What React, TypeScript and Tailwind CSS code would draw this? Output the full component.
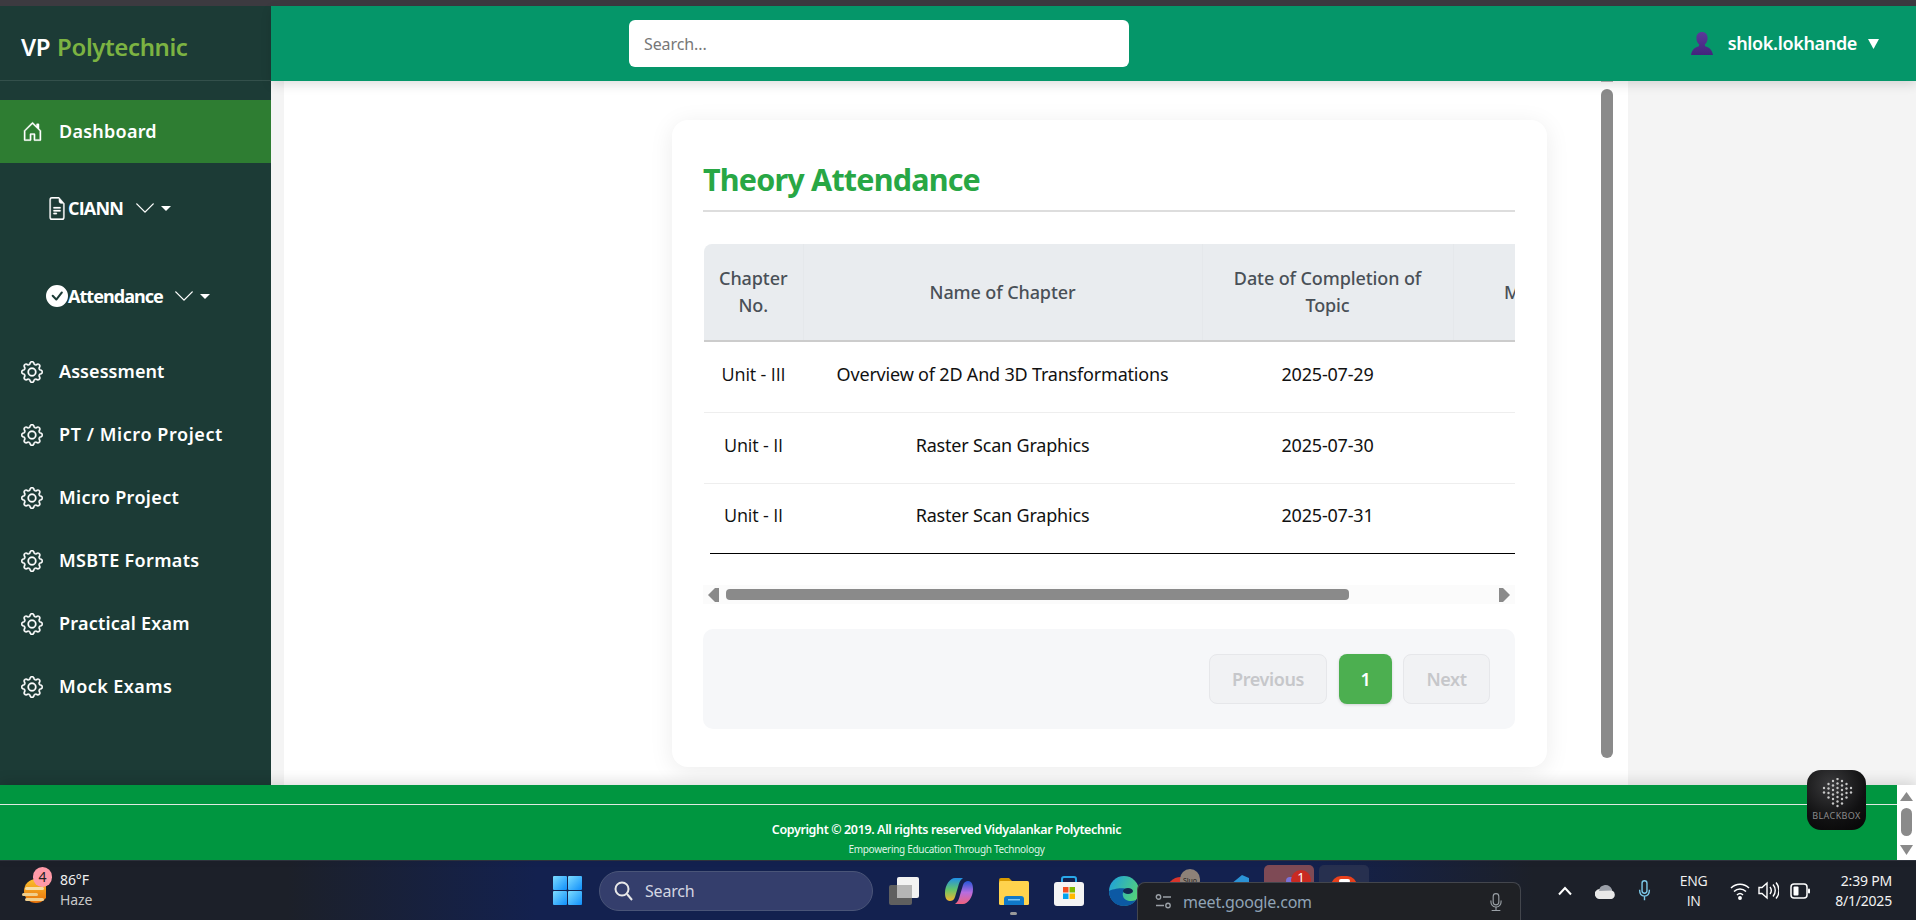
import React from "react";
import { BsHouseDoor, BsGear, BsFileEarmarkText, BsCheckCircleFill, BsChevronDown, BsMic } from "react-icons/bs";

const font = "[font-family:'Noto_Sans','Open_Sans',sans-serif]";
const plainI = "[font-family:'Open_Sans','Noto_Sans',sans-serif]";

function Caret() {
  return <span className="ml-[5px] inline-block h-0 w-0 border-x-[5px] border-t-[5px] border-x-transparent border-t-white" />;
}

function GearItem({ label, track }: { label: string; track: string }) {
  return (
    <div className={`flex h-[63px] items-center pl-[21px] text-[18px] font-semibold text-white ${track}`}>
      <BsGear className="h-[22px] w-[22px] shrink-0 stroke-[0.25px]" />
      <span className="ml-[16px]">{label}</span>
    </div>
  );
}

const gearItems: [string, string][] = [
  ["Assessment", "tracking-[0.07px]"],
  ["PT / Micro Project", "tracking-[0.58px]"],
  ["Micro Project", "tracking-[0.35px]"],
  ["MSBTE Formats", "tracking-[0.35px]"],
  ["Practical Exam", "tracking-[0.22px]"],
  ["Mock Exams", "tracking-[0.43px]"],
];

function Sidebar() {
  return (
    <aside className="flex w-[271px] shrink-0 flex-col bg-[#1c3b36]">
      <div className="flex h-[75px] items-center border-b border-[#33504b] pl-[21px] pt-[7px] text-[24px] font-semibold leading-none tracking-[-0.4px]">
        <span className="text-white">VP</span>
        <span className="ml-[7px] text-[#7cb342]">Polytechnic</span>
      </div>
      <div className="mt-[19px] flex h-[63px] items-center bg-[#2e7d32] pl-[22px] text-[18px] font-semibold tracking-[0.24px] text-white">
        <BsHouseDoor className="h-[21px] w-[21px] stroke-[0.25px]" />
        <span className="ml-[16px]">Dashboard</span>
      </div>
      <div className="mt-[1px] flex h-[88px] items-center pl-[47px] text-[18px] font-bold tracking-[-0.8px] text-white">
        <BsFileEarmarkText className="h-[23px] w-[20px] stroke-[0.2px]" preserveAspectRatio="none" />
        <span className={`ml-[1px] ${plainI}`}>CIANN</span>
        <BsChevronDown className="ml-[11px] h-[22px] w-[22px]" />
        <Caret />
      </div>
      <div className="flex h-[88px] items-center pl-[46px] text-[18px] font-bold tracking-[-0.95px] text-white">
        <BsCheckCircleFill className="h-[22px] w-[22px]" />
        <span>Attendance</span>
        <BsChevronDown className="ml-[10px] h-[22px] w-[22px]" />
        <Caret />
      </div>
      {gearItems.map(([l, t]) => (
        <GearItem key={l} label={l} track={t} />
      ))}
    </aside>
  );
}

function Header() {
  return (
    <header className="relative z-10 flex h-[75px] shrink-0 items-center bg-[#059669] shadow-[0_4px_10px_rgba(0,0,0,0.12)]">
      <div className="ml-[358px] flex h-[47px] w-[500px] items-center rounded-[6px] bg-white pl-[15px] text-[16px] tracking-[-0.1px] text-[#777]">
        Search...
      </div>
      <div className="ml-auto flex items-center pr-[37px] text-[18px] font-semibold tracking-[-0.35px] text-white">
        <svg width="22" height="23" viewBox="0 0 22 23">
          <defs>
            <linearGradient id="bust" x1="0" y1="0" x2="0" y2="1">
              <stop offset="0" stopColor="#5b3a9a" />
              <stop offset="1" stopColor="#43247c" />
            </linearGradient>
          </defs>
          <path d="M11 0c3.600 0 5.600 2.400 5.600 6 0 2.800-1 5-2.800 6.400l.4 1.800c3.600.9 6.800 3 7.800 8.800H0c1-5.800 4.200-7.900 7.800-8.800l.4-1.800C6.400 11 5.400 8.800 5.400 6 5.400 2.400 7.400 0 11 0z" fill="url(#bust)" />
        </svg>
        <span className="ml-[15px]">shlok.lokhande</span>
        <svg className="ml-[11px]" width="11" height="10" viewBox="0 0 11 10">
          <polygon points="0,0 11,0 5.500,10" fill="#fff" />
        </svg>
      </div>
    </header>
  );
}

const rows = [
  ["Unit - III", "Overview of 2D And 3D Transformations", "2025-07-29", "h-[71px]"],
  ["Unit - II", "Raster Scan Graphics", "2025-07-30", "h-[71px]"],
  ["Unit - II", "Raster Scan Graphics", "2025-07-31", "h-[70px]"],
];

function AttendanceTable() {
  return (
    <div className="ml-[1px] mt-[32px] overflow-hidden rounded-tl-[8px]">
      <table className="w-[1200px] table-fixed border-collapse text-center text-[18px]">
        <thead>
          <tr className="h-[97px] border-b-2 border-[#cccccc] bg-[#e9ecef] leading-[27px] tracking-[-0.1px] text-[#495057]">
            <th className="w-[99px] border-r border-[#e5e8eb] font-medium">Chapter<br />No.</th>
            <th className="w-[399px] border-r border-[#e5e8eb] font-medium">Name of Chapter</th>
            <th className="w-[251px] border-r border-[#e5e8eb] px-[20px] font-medium">Date of Completion of Topic</th>
            <th className="w-[168px] font-medium">Method</th>
            <th className="font-medium" />
          </tr>
        </thead>
        <tbody className="tracking-[-0.19px] text-[#111]">
          {rows.map((r, i) => (
            <tr key={r[2]} className={`${r[3]} ${i < 2 ? "border-b border-[#eeeeee]" : ""}`}>
              <td className={`pb-[5px] tracking-[-0.15px] ${plainI}`}>{r[0]}</td>
              <td className="whitespace-nowrap pb-[5px]">{r[1]}</td>
              <td className="pb-[5px]">{r[2]}</td>
              <td />
              <td />
            </tr>
          ))}
        </tbody>
      </table>
    </div>
  );
}

function HScrollbar() {
  return (
    <div className="mt-[31px] flex h-[19px] items-center bg-[#fbfbfb] pl-[5px] pr-[5px]">
      <svg width="11" height="14" viewBox="0 0 11 14"><polygon points="0,7 7,0 11,0 11,14 7,14" fill="#8a8a8a" /></svg>
      <div className="ml-[7px] h-[11px] w-[623px] rounded-[4px] bg-[#8a8a8a]" />
      <svg className="ml-auto" width="11" height="14" viewBox="0 0 11 14"><polygon points="11,7 4,0 0,0 0,14 4,14" fill="#8a8a8a" /></svg>
    </div>
  );
}

function Pagination() {
  return (
    <div className="mt-[25px] flex h-[100px] items-center justify-end rounded-[10px] bg-[#f6f7f9] pr-[25px] text-[18px] font-semibold tracking-[-0.4px]">
      <div className="flex h-[50px] w-[118px] items-center justify-center rounded-[8px] border border-[#e6e7ea] bg-[#f1f2f4] text-[#c6c7ca]">Previous</div>
      <div className="ml-[12px] flex h-[50px] w-[53px] items-center justify-center rounded-[8px] bg-[#4caf50] text-white shadow-[0_1px_3px_rgba(0,0,0,0.15)]">1</div>
      <div className="ml-[11px] flex h-[50px] w-[87px] items-center justify-center rounded-[8px] border border-[#e6e7ea] bg-[#f1f2f4] text-[#c6c7ca]">Next</div>
    </div>
  );
}

function Main() {
  return (
    <main className="flex min-h-0 flex-1 bg-[#f4f4f4] pl-[13px] pr-[288px]">
      <div className="flex flex-1 justify-end bg-white pr-[15px]">
        <div className="mt-[39px] h-[647px] w-[875px] rounded-[16px] bg-white pl-[31px] pr-[32px] shadow-[0_4px_24px_rgba(0,0,0,0.08)]">
          <h1 className="flex h-[90px] items-end pb-[16px] text-[30.5px] font-bold leading-none tracking-[-0.8px] text-[#28a745]">
            Theory Attendance
          </h1>
          <div className="h-[2px] bg-[#dddddd]" />
          <AttendanceTable />
          <div className="ml-[7px] h-[1px] bg-black" />
          <HScrollbar />
          <Pagination />
        </div>
        <div className="ml-[54px] flex w-[12px] flex-col">
          <div className="h-[1px] bg-[#b5b5b5]" />
          <div className="mt-[7px] h-[669px] rounded-[6px] bg-[#8a8a8a]" />
        </div>
      </div>
    </main>
  );
}

function Footer() {
  return (
    <footer className="relative z-10 flex h-[75px] shrink-0 bg-[#009640] shadow-[0_-4px_12px_rgba(0,0,0,0.12)]">
      <div className="flex-1 text-center text-white">
        <div className="mt-[19px] h-[1px] bg-[#dfe8e2]" />
        <div className="pr-[4px]">
          <p className="mt-[16px] text-[12.5px] font-semibold leading-[18px] tracking-[-0.38px]">Copyright © 2019. All rights reserved Vidyalankar Polytechnic</p>
          <p className="mt-[4px] text-[10px] leading-[13px] tracking-[-0.3px] text-[#dff3e6]">Empowering Education Through Technology</p>
        </div>
      </div>
      <div className="flex w-[19px] flex-col items-center bg-white pt-[7px]">
        <svg width="13" height="9" viewBox="0 0 13 9"><polygon points="6.500,0 13,9 0,9" fill="#8a8a8a" /></svg>
        <div className="mt-[7px] h-[28px] w-[11px] rounded-[6px] bg-[#8a8a8a]" />
        <svg className="mt-[9px]" width="13" height="10" viewBox="0 0 13 10"><polygon points="0,0 13,0 6.500,10" fill="#8a8a8a" /></svg>
      </div>
    </footer>
  );
}

function WeatherIcon() {
  return (
    <svg width="24" height="26" viewBox="0 0 24 26">
      <defs>
        <linearGradient id="sun" x1="0" y1="0" x2="0" y2="1">
          <stop offset="0" stopColor="#fbc02d" />
          <stop offset="1" stopColor="#e8710a" />
        </linearGradient>
      </defs>
      <circle cx="14" cy="13" r="12" fill="url(#sun)" />
      <rect x="3" y="9" width="19" height="3" rx="1.500" fill="#f6dfa6" />
      <rect x="0" y="15" width="16" height="3" rx="1.500" fill="#f0cf8d" />
      <rect x="3" y="20" width="19" height="3" rx="1.500" fill="#f0cf8d" />
    </svg>
  );
}

function WinLogo() {
  return (
    <svg width="29" height="29" viewBox="0 0 29 29">
      <defs>
        <linearGradient id="win" x1="0" y1="0" x2="1" y2="1">
          <stop offset="0" stopColor="#7ddcff" />
          <stop offset="1" stopColor="#0f8ffb" />
        </linearGradient>
      </defs>
      <rect x="0" y="0" width="14" height="14" rx="1" fill="url(#win)" />
      <rect x="15" y="0" width="14" height="14" rx="1" fill="url(#win)" />
      <rect x="0" y="15" width="14" height="14" rx="1" fill="url(#win)" />
      <rect x="15" y="15" width="14" height="14" rx="1" fill="url(#win)" />
    </svg>
  );
}

function TaskView() {
  return (
    <svg width="30" height="28" viewBox="0 0 30 28">
      <rect x="0" y="8" width="23" height="20" rx="2" fill="#5f5f5f" />
      <rect x="8" y="0" width="22" height="21" rx="2" fill="#f2f2f2" />
      <rect x="8" y="8" width="15" height="13" fill="#b5b5b5" />
    </svg>
  );
}

function Copilot() {
  return (
    <svg width="28" height="28" viewBox="0 0 28 28">
      <defs>
        <linearGradient id="co1" x1="0" y1="0" x2="0" y2="1">
          <stop offset="0" stopColor="#1f8fe8" />
          <stop offset="0.5" stopColor="#63c46b" />
          <stop offset="1" stopColor="#f5b52e" />
        </linearGradient>
        <linearGradient id="co2" x1="0" y1="0" x2="0" y2="1">
          <stop offset="0" stopColor="#2456d8" />
          <stop offset="0.5" stopColor="#b76de0" />
          <stop offset="1" stopColor="#f0627e" />
        </linearGradient>
      </defs>
      <path d="M10 1h8c-3 2-4 5-5 9l-3 10c-1 3-3 4-5 4C1 24 0 20 0 16 0 8 5 1 10 1z" fill="url(#co1)" />
      <path d="M18 27h-8c3-2 4-5 5-9l3-10c1-3 3-4 5-4 4 0 5 4 5 8 0 8-5 15-10 15z" fill="url(#co2)" />
    </svg>
  );
}

function Folder() {
  return (
    <svg width="30" height="28" viewBox="0 0 30 28">
      <path d="M0 3a2 2 0 0 1 2-2h8l4 4h-14z" fill="#d99a00" />
      <rect x="0" y="4" width="30" height="24" rx="1.500" fill="#ffd34d" />
      <path d="M5 28v-6a3 3 0 0 1 3-3h14a3 3 0 0 1 3 3v6z" fill="#0f78c9" />
      <rect x="9" y="22" width="12" height="1.500" fill="#7cc6f5" />
    </svg>
  );
}

function Store() {
  return (
    <svg width="30" height="30" viewBox="0 0 30 30">
      <path d="M8 7V3a2 2 0 0 1 2-2h10a2 2 0 0 1 2 2v4" fill="none" stroke="#29a8ea" strokeWidth="2" />
      <rect x="0" y="6" width="30" height="24" rx="3" fill="#f4f4f4" />
      <rect x="9" y="11" width="5.500" height="5.500" fill="#f25022" />
      <rect x="15.500" y="11" width="5.500" height="5.500" fill="#7fba00" />
      <rect x="9" y="17.500" width="5.500" height="5.500" fill="#00a4ef" />
      <rect x="15.500" y="17.500" width="5.500" height="5.500" fill="#ffb900" />
    </svg>
  );
}

function Edge() {
  return (
    <svg width="30" height="30" viewBox="0 0 30 30">
      <defs>
        <linearGradient id="ed1" x1="0" y1="0" x2="1" y2="0.500">
          <stop offset="0" stopColor="#1b9de2" />
          <stop offset="1" stopColor="#52d17c" />
        </linearGradient>
      </defs>
      <circle cx="15" cy="15" r="15" fill="url(#ed1)" />
      <path d="M0 15c0 9 7 15 15 15 6 0 10-3 12-6-5 2-12 1-13-4-1-3 1-6 4-7-5-2-15 0-18 2z" fill="#0c59a4" />
      <ellipse cx="19" cy="15" rx="5" ry="3" fill="#13264f" />
    </svg>
  );
}

function Tray() {
  return (
    <div className="ml-auto flex items-center pr-[24px] text-[#f2f2f2]">
      <svg width="16" height="10" viewBox="0 0 16 10"><path d="M2 8.500 8 2l6 6.500" fill="none" stroke="#fff" strokeWidth="2" /></svg>
      <svg className="ml-[22px]" width="21" height="16" viewBox="0 0 21 16">
        <path d="M5 16a5 5 0 0 1-.5-10A7 7 0 0 1 17 7.500 4.500 4.500 0 0 1 16.500 16z" fill="#e8e8e8" />
        <path d="M10 2a7 7 0 0 1 7 5.500l-13 .5a7 7 0 0 1 6-6z" fill="#9a9fa8" />
      </svg>
      <svg className="ml-[21px]" width="15" height="21" viewBox="0 0 16 30" fill="none" stroke="#7cc8e8" strokeWidth="2">
        <rect x="4.500" y="1" width="7" height="18" rx="3.500" />
        <path d="M1 14c0 6 3 9 7 9s7-3 7-9M8 23v6" />
      </svg>
      <div className={`ml-[26px] flex w-[31px] flex-col items-center text-[14px] leading-[20px] tracking-[-0.3px] ${plainI}`}>
        <span>ENG</span>
        <span>IN</span>
      </div>
      <svg className="ml-[21px]" width="20" height="20" viewBox="0 0 20 20" fill="none" stroke="#fff" strokeWidth="1.500">
        <path d="M1 7c5-5 13-5 18 0M4 10.500c3.500-3.500 8.500-3.500 12 0M7 14c2-2 4-2 6 0" />
        <circle cx="10" cy="17" r="1.200" fill="#fff" />
      </svg>
      <svg className="ml-[8px]" width="21" height="21" viewBox="0 0 21 21" fill="none" stroke="#fff" strokeWidth="1.400">
        <path d="M1 7.500v6h3l5 4.500V3L4 7.500z" />
        <path d="M12 7c1.500 2 1.500 5 0 7M15 4.500c3 3.500 3 8.500 0 12M18 2.500c4 4.500 4 11.500 0 16" />
      </svg>
      <svg className="ml-[11px]" width="20" height="16" viewBox="0 0 20 16" fill="none">
        <rect x="1" y="1" width="16" height="14" rx="3" stroke="#fff" strokeWidth="1.500" />
        <rect x="3.500" y="3.500" width="5" height="9" rx="1" fill="#fff" />
        <rect x="18" y="5.500" width="2" height="5" rx="1" fill="#fff" />
      </svg>
      <div className="ml-[25px] flex flex-col items-end text-[14px] leading-[20px] tracking-[-0.2px]">
        <span>2:39 PM</span>
        <span>8/1/2025</span>
      </div>
    </div>
  );
}

function Taskbar() {
  return (
    <div className="relative flex h-[60px] shrink-0 items-center border-t border-[#30343e] bg-[linear-gradient(90deg,#1c2029_0%,#1c2029_15%,#13214f_28%,#13214f_68%,#1c2029_80%,#1c2029_100%)]">
      <div className="flex w-[553px] shrink-0 items-center pl-[22px]">
        <div className="relative">
          <WeatherIcon />
          <span className="absolute left-[11px] top-[-11px] flex h-[20px] w-[19px] items-center justify-center rounded-full bg-[#ff9aa8] text-[14px] text-[#222]">4</span>
        </div>
        <div className="-mt-[2px] ml-[14px] flex flex-col text-[14px] leading-[20px] tracking-[-0.1px] text-[#f0f0f0]">
          <span>86°F</span>
          <span className="text-[#c8c8c8]">Haze</span>
        </div>
      </div>
      <WinLogo />
      <div className="ml-[17px] flex h-[40px] w-[274px] items-center rounded-full border border-[#4a5578] bg-[#343e6c] pl-[14px] text-[16px] tracking-[-0.2px] text-[#d3d6e2]">
        <svg width="19" height="20" viewBox="0 0 19 20" fill="none" stroke="#e8e8e8" strokeWidth="2">
          <circle cx="8" cy="8" r="6.500" />
          <path d="M13 13l5 6" />
        </svg>
        <span className="ml-[12px]">Search</span>
      </div>
      <div className="ml-[16px]"><TaskView /></div>
      <div className="ml-[26px]"><Copilot /></div>
      <div className="relative ml-[26px]">
        <Folder />
        <span className="absolute left-[11px] top-[35px] h-[3px] w-[7px] rounded-full bg-[#9a9a9a]" />
      </div>
      <div className="ml-[25px]"><Store /></div>
      <div className="ml-[25px]"><Edge /></div>
      <div className="relative ml-[27px] mt-[8px] h-[30px] w-[34px] self-start">
        <div className="absolute left-0 top-[8px] h-[30px] w-[30px] rounded-full bg-[#d8352b]" />
        <div className="absolute left-[14px] top-0 flex h-[22px] w-[20px] items-center justify-center rounded-full bg-[#8d8178] text-[7px] leading-none text-[#1a1a1a]">Sluo</div>
      </div>
      <svg className="ml-[19px] mt-[14px] self-start" width="30" height="14" viewBox="0 0 30 14"><path d="M0 14 12 9 23 0l7 3v11z" fill="#2b93d6" /></svg>
      <div className="relative ml-[15px] mt-[4px] h-[45px] w-[50px] self-start rounded-[5px] bg-[#7e4a55]">
        <span className="absolute left-[22px] top-[12px] h-[8px] w-[10px] rounded-full bg-[#7a72d8]" />
        <span className="absolute left-[27px] top-[5px] flex h-[20px] w-[20px] items-start justify-center rounded-full bg-[#c92a22] pt-[1px] text-[13px] leading-none text-white">1</span>
      </div>
      <div className="ml-[5px] mt-[4px] flex h-[45px] w-[50px] justify-center self-start rounded-[5px] bg-[#27304f]">
        <span className="mt-[11px] flex h-[16px] w-[26px] justify-center rounded-t-[10px] bg-[#e8401c]">
          <span className="mt-[3px] h-[4px] w-[11px] rounded-[2px] bg-white" />
        </span>
      </div>
      <Tray />
      <div className="absolute bottom-0 left-[1137px] flex h-[38px] w-[384px] items-center rounded-t-[8px] border border-b-0 border-[#43464d] bg-[#1f2125] pl-[17px] text-[16px] tracking-[-0.2px] text-[#8fa3b5]">
        <svg width="17" height="17" viewBox="0 0 17 17" fill="none" stroke="#9aa0a6" strokeWidth="1.400">
          <circle cx="3.500" cy="4" r="2.200" />
          <path d="M8 4h8M1 12.500h8" />
          <circle cx="13" cy="12.500" r="2.200" />
        </svg>
        <span className="ml-[11px]">meet.google.com</span>
        <BsMic className="ml-auto mr-[15px] h-[18px] w-[18px] text-[#9aa0a6]" />
      </div>
    </div>
  );
}

function Blackbox() {
  const dots: [number, number][] = [];
  const cols = [[10, 18], [6, 22], [3, 26], [1, 30], [3, 26], [6, 22], [10, 18]];
  cols.forEach(([a, b], i) => {
    for (let y = a; y <= b; y += 4.5) dots.push([5 + i * 4.5, y]);
  });
  return (
    <div className="absolute left-[1807px] top-[770px] z-20 flex h-[60px] w-[59px] flex-col items-center rounded-[14px] bg-[radial-gradient(circle_at_40%_25%,#3a3a3c_0%,#111112_60%,#050505_100%)] pt-[8px]">
      <svg width="36" height="32" viewBox="0 0 36 32">
        {dots.map(([x, y], i) => <circle key={i} cx={x} cy={y} r="1.200" fill="#c8c8c8" />)}
      </svg>
      <span className="mt-[1px] text-[9px] leading-[10px] tracking-[0.4px] text-[#8a8a8a]">BLACKBOX</span>
    </div>
  );
}

export default function App() {
  return (
    <div className={`relative flex h-[920px] w-[1916px] flex-col overflow-hidden bg-[#f4f4f4] ${font}`}>
      <div className="h-[6px] shrink-0 bg-[#3c3a40]" />
      <div className="flex min-h-0 flex-1">
        <Sidebar />
        <div className="flex min-w-0 flex-1 flex-col">
          <Header />
          <Main />
        </div>
      </div>
      <Footer />
      <Taskbar />
      <Blackbox />
    </div>
  );
}
